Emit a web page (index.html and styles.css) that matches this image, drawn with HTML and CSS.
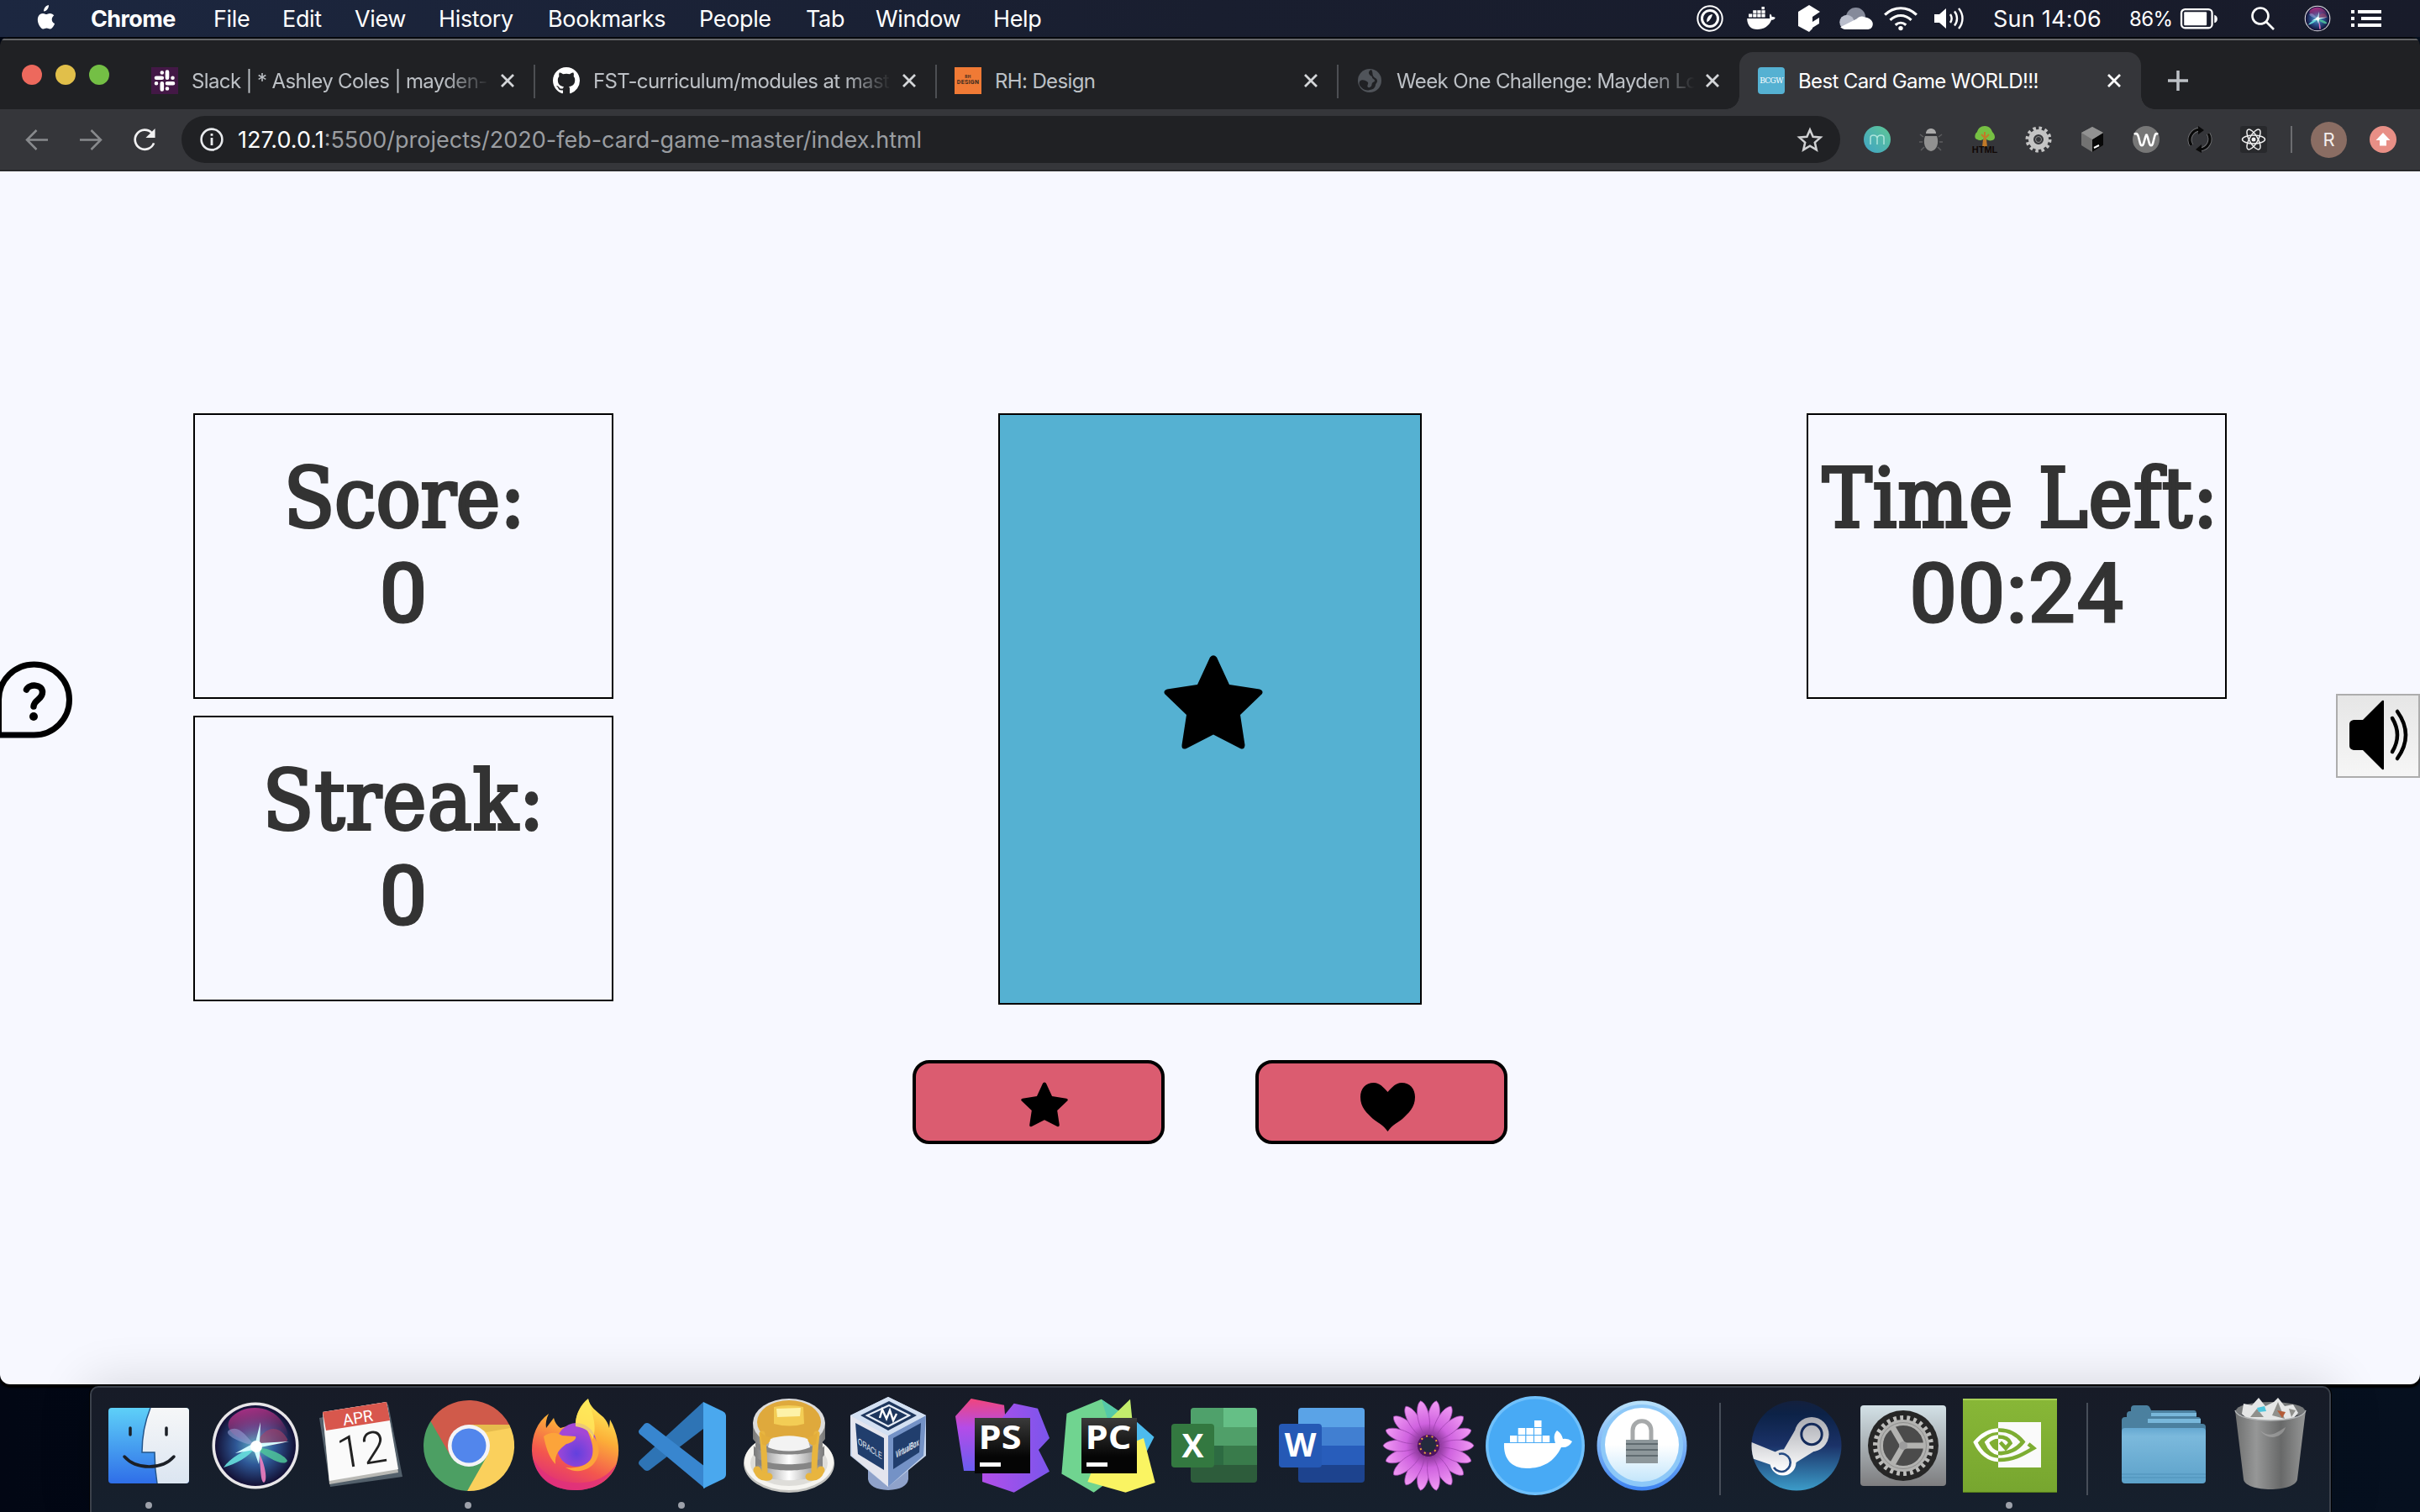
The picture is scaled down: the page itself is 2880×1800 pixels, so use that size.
FILE: index.html
```html
<!DOCTYPE html>
<html lang="en">
<head>
<meta charset="utf-8">
<title>Best Card Game WORLD!!!</title>
<link rel="stylesheet" href="styles.css">
</head>
<body>
<div class="desktop">

<header class="menubar">
  <svg class="apple" viewBox="0 0 26 32"><path d="M18.4 0c.3 2.200-.6 4.100-1.800 5.500-1.200 1.300-2.700 2.100-4 2-.2-2 .7-4 1.900-5.300C15.700 1 17.300.1 18.400 0zM22.200 17c0-3 2.400-4.500 2.600-4.600-1.500-2.100-3.700-2.400-4.500-2.500-1.900-.2-3.700 1.100-4.700 1.100-1 0-2.500-1.100-4.100-1.100-2.100 0-4 1.200-5.100 3.100-2.200 3.800-.6 9.400 1.600 12.500 1 1.500 2.300 3.200 3.900 3.100 1.600 0 2.200-1 4.100-1s2.400 1 4.100 1 2.800-1.500 3.800-3c1.200-1.700 1.700-3.400 1.700-3.500-.1 0-3.400-1.300-3.400-5.100z" transform="translate(-2.500 1)"/></svg>
  <nav class="menus">
    <b>Chrome</b><span>File</span><span>Edit</span><span>View</span><span>History</span><span>Bookmarks</span><span>People</span><span>Tab</span><span>Window</span><span>Help</span>
  </nav>
  <div class="status">
    <svg class="st-circle" viewBox="0 0 32 32" fill="none" stroke="#fff"><circle cx="16" cy="16" r="14.700" stroke-width="2"/><circle cx="16" cy="16" r="9.500" stroke-width="3"/><path d="M12.500 20.500c-1-4 1-8.500 6.500-9.500-1 4-2.500 7-6.500 9.500z" fill="#fff" stroke="none"/></svg>
    <svg class="st-docker" viewBox="0 0 36 30" fill="#fff"><path d="M0 15h29c0-2-1-4 .5-6 1.500 1 2 2.500 2 4 1.500-.3 3 0 4.500 1-1 2.500-3 3-5 3C28 25 21 29 13 29 5 29 0 24 0 15z"/><path d="M2 9h4.500v4.500H2zM7.500 9H12v4.500H7.500zM13 9h4.500v4.500H13zM18.500 9H23v4.500h-4.500zM7.500 4.500H12v3.700H7.500zM13 4.500h4.500v3.700H13zM18.500 4.500H23v3.700h-4.500zM18.500 0h3.700v3.500h-3.700z"/></svg>
    <svg class="st-cube" viewBox="0 0 26 32" fill="#fff"><path d="M0 8 13 0l13 8-9 6v14l-4 4L0 25zM17 20l8-5v7l-8 5z"/></svg>
    <svg class="st-cloud" viewBox="0 0 42 28"><circle cx="20" cy="12" r="12" fill="#858a9a"/><circle cx="9" cy="18" r="9" fill="#b9bdcb"/><path d="M9 27c-3 0-6-1-8-3l20-10c3-3 7-4 10-2 5 0 10 4 10 8 0 5-3 7-7 7z" fill="#fff"/></svg>
    <svg class="st-wifi" viewBox="0 0 42 30" fill="none" stroke="#fff" stroke-width="3.200"><path d="M1.500 10c11-11 28-11 39 0M8 16.500c8-7.500 18-7.500 26 0M14.500 22.500c4-3.500 9-3.500 13 0"/><circle cx="21" cy="26.500" r="2.800" fill="#fff" stroke="none"/></svg>
    <svg class="st-volume" viewBox="0 0 36 26" fill="none" stroke="#fff" stroke-width="2.400"><path d="M0 8h6l8-7v24l-8-7H0z" fill="#fff" stroke="none"/><path d="M19 8c2 3 2 7 0 10M24 4.500c4 5 4 12 0 17M29 1c6 7 6 17 0 24"/></svg>
    <span class="clock">Sun 14:06</span>
    <span class="charge">86%</span>
    <svg class="st-battery" viewBox="0 0 46 26"><rect x="1.200" y="1.200" width="38" height="23" rx="4.500" fill="none" stroke="#fff" stroke-width="2.400"/><rect x="4.500" y="4.500" width="28" height="16.500" rx="1" fill="#fff"/><path d="M42 8c5 1 5 9 0 10z" fill="#fff"/></svg>
    <svg class="st-search" viewBox="0 0 28 28" fill="none" stroke="#fff" stroke-width="2.600"><circle cx="11" cy="11" r="9.500"/><path d="m18 18 9 9"/></svg>
    <svg class="st-siri" viewBox="0 0 128 128"><use href="#siri-orb" transform="translate(-12 -12) scale(1.190)"/></svg>
    <svg class="st-list" viewBox="0 0 36 20" fill="#fff"><path d="M0 0h4v4H0zM8 0h28v4H8zM0 8h4v4H0zM12 8h24v4H12zM0 16h4v4H0zM8 16h28v4H8z"/></svg>
  </div>
</header>

<div class="window">
  <div class="tabstrip">
    <div class="lights"><i class="red"></i><i class="amber"></i><i class="green"></i></div>
    <div class="tabs">
      <div class="tab">
        <svg class="favicon" viewBox="0 0 32 32"><path fill="#431846" d="M0 0h32v32H0z"/><g fill="none" stroke="#fff" stroke-width="4.600" stroke-linecap="round"><path d="M12.800 6.500v0M12.800 12.800H6M19 5.500v7.300M25.500 12.800v0M12.800 19.200v7.300M6 19.200v0M19 19.200h7M19 25.500v0"/></g></svg>
        <span class="title faded">Slack | * Ashley Coles | mayden-</span><svg class="close" viewBox="0 0 18 18"><path d="m2 2 14 14M16 2 2 16"/></svg>
      </div>
      <div class="tab divided">
        <svg class="favicon" viewBox="0 0 16 16"><path fill="#fff" d="M8 0C3.580 0 0 3.580 0 8c0 3.540 2.290 6.530 5.470 7.590.4.070.55-.17.55-.38 0-.19-.01-.82-.01-1.490-2.010.37-2.530-.49-2.690-.94-.09-.23-.48-.94-.82-1.130-.28-.15-.68-.52-.01-.53.63-.01 1.080.58 1.230.82.72 1.210 1.870.87 2.330.66.07-.52.28-.87.51-1.070-1.780-.2-3.640-.89-3.640-3.950 0-.87.31-1.590.82-2.150-.08-.2-.36-1.020.08-2.120 0 0 .67-.21 2.200.82.64-.18 1.320-.27 2-.27s1.360.09 2 .27c1.530-1.040 2.200-.82 2.200-.82.44 1.100.16 1.920.08 2.120.51.56.82 1.270.82 2.150 0 3.070-1.870 3.750-3.650 3.950.29.25.54.73.54 1.480 0 1.070-.01 1.930-.01 2.200 0 .21.15.46.55.38A8.010 8.010 0 0 0 16 8c0-4.420-3.580-8-8-8z"/></svg>
        <span class="title faded">FST-curriculum/modules at mast</span><svg class="close" viewBox="0 0 18 18"><path d="m2 2 14 14M16 2 2 16"/></svg>
      </div>
      <div class="tab divided">
        <span class="favicon rh"><small>RH</small>DESIGN</span>
        <span class="title">RH: Design</span><svg class="close" viewBox="0 0 18 18"><path d="m2 2 14 14M16 2 2 16"/></svg>
      </div>
      <div class="tab divided">
        <svg class="favicon" viewBox="0 0 32 32"><circle cx="16" cy="16" r="14" fill="#50545a"/><path fill="#202124" d="M18 3c-3 1-4 4-2 6 1 2 3 1 3 3s3 2 3 4-2 1-3 3 0 4-3 5-3-2-2-4-1-3-3-4-5-1-6 0-3 4 1 8 8 4 10 3c5 0 7-4 7-6 1-3 2-2 2-5s-4-3-5-6 0-4-2-7z"/></svg>
        <span class="title faded">Week One Challenge: Mayden Lo</span><svg class="close" viewBox="0 0 18 18"><path d="m2 2 14 14M16 2 2 16"/></svg>
      </div>
      <div class="tab active">
        <span class="favicon bcgw">BCGW</span>
        <span class="title">Best Card Game WORLD!!!</span><svg class="close" viewBox="0 0 18 18"><path d="m2 2 14 14M16 2 2 16"/></svg>
      </div>
      <svg class="newtab" viewBox="0 0 24 24"><path d="M12 0v24M0 12h24"/></svg>
    </div>
  </div>

  <div class="toolbar">
    <svg class="nav dim" viewBox="0 0 28 26"><path d="M27 13H2M13.500 1.500 2 13l11.500 11.500"/></svg>
    <svg class="nav dim" viewBox="0 0 28 26"><path d="M1 13h25M14.500 1.500 26 13 14.500 24.500"/></svg>
    <svg class="nav" viewBox="0 0 28 28"><path d="M25.500 18A12 12 0 1 1 23 5.500"/><path d="M27 0v11.500H15.500z" fill="#f1f1f2" stroke="none"/></svg>
    <div class="omnibox">
      <svg class="info" viewBox="0 0 28 28"><circle cx="14" cy="14" r="12.400" fill="none" stroke="#e8eaed" stroke-width="2.600"/><path d="M12.600 7h2.800v2.800h-2.800zM12.600 12h2.800v9h-2.800z" fill="#e8eaed"/></svg>
      <span class="url"><b>127.0.0.1</b>:5500/projects/2020-feb-card-game-master/index.html</span>
      <svg class="bookmark" viewBox="0 0 30 28"><path d="m15 2.500 3.600 8.300 9 .8-6.800 6 2 8.800-7.800-4.700-7.800 4.700 2-8.800-6.800-6 9-.8z" fill="none" stroke="#d0d1d3" stroke-width="2.500"/></svg>
    </div>
    <div class="extensions">
      <svg viewBox="0 0 32 32"><defs><linearGradient id="mm" x1="1" y1="0" x2="0" y2="1"><stop stop-color="#5fc795"/><stop offset="1" stop-color="#3fa3c6"/></linearGradient></defs><circle cx="16" cy="16" r="16" fill="url(#mm)"/><path d="M8 22v-8c0-4 7-4 8 0v8m0-8c1-4 8-4 8 0v8" fill="none" stroke="#aee5dc" stroke-width="1.500"/></svg>
      <svg viewBox="0 0 32 32"><path d="M10 9c0-8 12-8 12 0z" fill="#aaa"/><path d="M9 12h14c3 8 0 17-7 18-7-1-10-10-7-18z" fill="#919191"/><path d="m7 13-4-3M6 19H2M8 25l-4 4M25 13l4-3M26 19h4M24 25l4 4" stroke="#5d5e60" stroke-width="1.500"/></svg>
      <svg viewBox="0 0 32 32"><path d="M14 16h4l1 9h-6z" fill="#c27a28"/><path d="M16 0c6 0 8 4 9 7 4 4 4 9 0 10-3 1-5 0-9-2-4 2-6 3-9 1-4-1-3-7 0-9 1-4 4-7 9-7z" fill="#76c043"/><path d="M16 18V7m0 8 5-5m-5 4-4-4" stroke="#c27a28" stroke-width="2"/><text x="16" y="32" text-anchor="middle" class="html-mark">HTML</text></svg>
      <svg viewBox="0 0 32 32"><circle cx="16" cy="16" r="13.500" fill="none" stroke="#c4c4c4" stroke-width="4" stroke-dasharray="3.500 3.570"/><circle cx="16" cy="16" r="9" fill="none" stroke="#c4c4c4" stroke-width="6"/><circle cx="16" cy="16" r="3.500" fill="none" stroke="#909090" stroke-width="1"/></svg>
      <svg viewBox="0 0 32 32"><path d="M16 1 29 8v15l-13 8-13-8V8z" fill="#727272"/><path d="m16 16 13-8v15l-13 8z" fill="#080808"/><path d="m3 8 13-7 13 7-13 8z" fill="#929292"/><path d="m18 26 6-3" stroke="#fff" stroke-width="2"/></svg>
      <svg viewBox="0 0 32 32"><circle cx="16" cy="16" r="16" fill="#777"/><path d="M2 10c2-2 4-1 5 3l2 8c1 3 3 3 4 0l2.500-9c.5-2 1.500-2 2 0L20 21c1 3 3 3 4 0l2-8c1-4 2-5 4-3" fill="none" stroke="#fff" stroke-width="2.600"/></svg>
      <svg viewBox="0 0 32 32"><g fill="none" stroke="#707174" stroke-width="5"><path d="M6 23C1 15 6 5 16 4M26 9c5 8 0 18-10 19"/></g><g fill="none" stroke="#090909" stroke-width="3.200"><path d="M6 23C1 15 6 5 16 4M26 9c5 8 0 18-10 19"/></g><path d="m14 0 7 5-7 5zM18 22l-7 6 7 4z" fill="#090909"/></svg>
      <svg viewBox="0 0 32 32"><rect width="32" height="32" rx="3" fill="#28292c"/><g fill="none" stroke="#eee" stroke-width="1.500"><ellipse cx="16" cy="16" rx="13.500" ry="5"/><ellipse cx="16" cy="16" rx="13.500" ry="5" transform="rotate(60 16 16)"/><ellipse cx="16" cy="16" rx="13.500" ry="5" transform="rotate(120 16 16)"/></g><circle cx="16" cy="16" r="2.500" fill="#eee"/></svg>
    </div>
    <i class="bar-divider"></i>
    <span class="avatar">R</span>
    <svg class="update" viewBox="0 0 32 32"><circle cx="16" cy="16" r="16" fill="#e88f86"/><path d="m16 8 8.500 9H20v6.500h-8V17H7.500z" fill="#fff"/></svg>
  </div>

  <main class="game">
    <div class="board">
      <section class="side">
        <div class="panel"><span class="label w-score">Score:</span><span class="value">0</span></div>
        <div class="panel"><span class="label w-streak">Streak:</span><span class="value">0</span></div>
      </section>
      <section class="center">
        <div class="card"><svg class="card-star" viewBox="0 0 118 112"><path id="star" d="M55 2.500Q59 -2 63 2.500L78 35l36 5.500Q119 42 117 46L91 71l5.500 36Q96 113 91 111L59 94.500 27 111Q21 113 21.500 107L27 71 1 46Q-1 42 4 40.500L40 35z"/></svg></div>
        <div class="choices">
          <button class="choice"><svg class="choice-star" viewBox="0 0 118 112"><use href="#star"/></svg></button>
          <button class="choice"><svg class="choice-heart" viewBox="0 0 65 58"><path d="M32.500 11C38 5 42 0 49 0c10 0 16 7 16 17 0 13-8 19-15 26-5 4-12 7-17.500 15C27 50 20 47 15 43 8 36 0 30 0 17 0 7 6 0 16 0c7 0 11 5 16.500 11z"/></svg></button>
        </div>
      </section>
      <section class="side">
        <div class="panel"><span class="label w-time">Time Left:</span><span class="value">00:24</span></div>
      </section>
    </div>
    <button class="help"><svg viewBox="0 0 86 92"><path d="M-1.500 88V46a42 42 0 1 1 42 42z" fill="none" stroke="#000" stroke-width="7"/><path d="M31.500 34c3-7 19-7 19 3 0 9-10 9-10.500 17" fill="none" stroke="#000" stroke-width="7.500" stroke-linecap="round"/><circle cx="40" cy="66" r="5"/></svg></button>
    <button class="sound"><svg viewBox="0 0 70 84"><path d="M5 24h11L39 1q2-1 2 1v80q0 2-2 1L16 60H5q-5-1-5-5V29q0-4 5-5z"/><g fill="none" stroke="#000" stroke-width="4.500" stroke-linecap="round"><path d="M51 22q12 20 0 40M57 14q20 28 0 56"/></g></svg></button>
  </main>
</div>

<footer class="dock">
  <div class="app on">
    <svg viewBox="0 0 128 128"><defs><linearGradient id="fa" x2="0" y2="1"><stop stop-color="#5ed0f8"/><stop offset="1" stop-color="#2f6ee8"/></linearGradient><linearGradient id="fb" x2="0" y2="1"><stop stop-color="#f6f7f8"/><stop offset="1" stop-color="#dbe5f1"/></linearGradient></defs><rect x="16" y="19" width="96" height="90" rx="4" fill="url(#fa)"/><path d="M66 19h42q4 0 4 4v82q0 4-4 4H74c-2-12-3-24-3-37H56c0-19 4-38 10-53z" fill="url(#fb)"/><path d="M66 19c-6 15-10 34-10 53h15c0 13 1 25 3 37" fill="none" stroke="#24568a" stroke-width="1.500"/><path d="M42 43v8M85 43v8M35 77c14 16 45 16 59 0" fill="none" stroke="#1b1f26" stroke-width="3.500" stroke-linecap="round"/></svg>
  </div>
  <div class="app">
    <svg viewBox="0 0 128 128"><defs><radialGradient id="sa"><stop stop-color="#63b6c8"/><stop offset=".5" stop-color="#2e5796"/><stop offset="1" stop-color="#15163c"/></radialGradient><linearGradient id="sb" x2=".3" y2="1"><stop stop-color="#b0338e"/><stop offset="1" stop-color="#c92f72" stop-opacity="0"/></linearGradient></defs><g id="siri-orb"><circle cx="64" cy="64" r="51.500" fill="#e8e6e8"/><circle cx="64" cy="64" r="48" fill="#15123a"/><circle cx="64" cy="64" r="46" fill="url(#sa)"/><path d="M64 64C38 54 26 44 34 32c14-18 48-18 62 4 12 18 10 26-32 28z" fill="url(#sb)"/><path d="M64 64c10-24 28-26 38-8 3 5-20 9-38 8z" fill="#a63f66" opacity=".6"/><path d="M64 64C52 52 44 38 32 46c-6 5 14 15 32 18z" fill="#9aa4d8" opacity=".55"/><path d="M64 66c8 6 4 40 10 42 6-2 0-30-10-42z" fill="#f07ec0" opacity=".9"/><path d="M62 66c16 0 36 8 40 16-4 8-24-4-40-16z" fill="#4fc59a" opacity=".85"/><path d="M62 64c-10 6-28 14-36 26 14-4 30-12 38-24z" fill="#67e0de" opacity=".9"/><path d="m64 60 6-24-1 25 35-2-34 7-2 20-6-17-22 4z" fill="#d4fbff"/><circle cx="65" cy="65" r="7" fill="#fff"/></g></svg>
  </div>
  <div class="app">
    <svg viewBox="0 0 128 128"><path d="m13 31 82-16 17 86-86 12z" fill="#53606b"/><path d="m17 24 76-12 14 84-82 14z" fill="#b9b9b5"/><path d="m17 24 76-12 14 80-82 14z" fill="#fafafa"/><path d="M17 24 93 12l4 22-76 12z" fill="#d8574d"/><g transform="rotate(-9 64 64)"><text x="64" y="37" text-anchor="middle" class="cal-month">APR</text><text x="63" y="87" text-anchor="middle" class="cal-day">12</text></g></svg>
  </div>
  <div class="app on">
    <svg viewBox="0 0 128 128"><path d="M18.500 35A54 54 0 0 0 62 118l28-42-26-12z" fill="#4c9f63"/><path d="M62 118A54 54 0 0 0 112 39H64l21.600 37.500z" fill="#fad05c"/><path d="M18.500 35A54 54 0 0 1 112 39H64L42.400 76.500z" fill="#d05a4a"/><path d="M64 39h48l1.500 4L85 48z" fill="#d9ad43" opacity=".6"/><circle cx="64" cy="64" r="25" fill="#f4f4f6"/><circle cx="64" cy="64" r="20.500" fill="#5286ec"/></svg>
  </div>
  <div class="app">
    <svg viewBox="0 0 128 128"><defs><linearGradient id="ff" x1=".7" x2=".3" y2="1"><stop stop-color="#fdf05a"/><stop offset=".35" stop-color="#fcae38"/><stop offset=".7" stop-color="#f3564e"/><stop offset="1" stop-color="#dd2b7e"/></linearGradient><radialGradient id="fp" cy=".7"><stop stop-color="#6240de"/><stop offset="1" stop-color="#a347d6"/></radialGradient></defs><path d="M32 26c-3 6-4 12-3 17l9-12q2 8 8 12c6-2 12-3 18-3 0-14 6-25 15-32 2 10 10 15 18 22 4 4 6 9 7 13l1-10c9 16 12 34 9 48-4 21-23 35-48 36C35 118 13 99 12 70c0-18 6-34 20-44z" fill="url(#ff)"/><path d="M14 80c4 25 25 37 50 37 23 0 43-13 49-32-14 22-36 24-52 23-22-1-38-12-47-28z" fill="#e0317c" opacity=".8"/><ellipse cx="65" cy="63" rx="24" ry="26" fill="url(#fp)"/><path d="M26 53c8-6 16-5 22-1l16 1c2 3-5 8-11 9-8 6-14 12-13 24C31 77 28 62 26 53z" fill="#fca43a"/><path d="M78 46c12 8 18 24 10 36-7 12-23 16-36 8 17 2 30-4 32-15 2-10-2-19-6-29z" fill="#fca43a"/><path d="M79 9c-10 8-16 20-15 32 13 2 19 8 20 16 6-14 1-29-5-48z" fill="#ffea5c" opacity=".8"/></svg>
  </div>
  <div class="app on">
    <svg viewBox="0 0 128 128"><path d="M89 12 13 82q-2 3 0 5l6 6q3 2 6 0l64-49z" fill="#2e74b5"/><path d="m13 45 6-7q3-2 6 0l66 51v26L13 50q-2-3 0-5z" fill="#3886cf"/><path d="m89 12 23 11q4 2 4 6v69q0 4-4 6l-23 11z" fill="#4aa8ee"/></svg>
  </div>
  <div class="app">
    <svg viewBox="0 0 128 128"><defs><linearGradient id="pk"><stop stop-color="#777"/><stop offset=".5" stop-color="#fff"/><stop offset="1" stop-color="#777"/></linearGradient></defs><ellipse cx="64" cy="85" rx="54" ry="35" fill="#c4c4c0"/><ellipse cx="64" cy="83" rx="53" ry="34" fill="#f6f5f1"/><ellipse cx="64" cy="85" rx="46" ry="27" fill="#deddd9"/><path d="M24 38v54c8 17 72 17 80 0V38z" fill="#858585"/><path d="M24 83c8 14 72 14 80 0v11c-8 15-72 15-80 0zM22 64c8 14 76 14 84 0v11c-8 15-76 15-84 0zM21 38h86v18c-8 15-78 15-86 0z" fill="url(#pk)"/><ellipse cx="64" cy="37" rx="43" ry="29" fill="#dcdcdc"/><ellipse cx="64" cy="36" rx="38" ry="26" fill="#dfa93c"/><g fill="none" stroke="#e8b53f" stroke-linecap="round"><path d="M32 50q3 25 3 46M97 50q-3 25-3 46" stroke-width="7"/><path d="M26 93q4 10 14 8M102 93q-4 10-14 8" stroke-width="9"/></g><path d="M30 48c10 12 58 12 68 0l-2 14q-5 4-9-3-23-8-46 0-5 7-9 3z" fill="#e3ad3a"/><path d="M42 56c14-5 30-5 44 0l3 10c-14 6-36 6-50 0z" fill="#f3f3f3"/><path d="M46 18q18-4 35 0l1 20q-17 5-36 0z" fill="#f3cd55"/><path d="m49 20 29-1-1 10-27 1z" fill="#fdf2a8"/></svg>
  </div>
  <div class="app">
    <svg class="vbox" viewBox="0 0 128 128"><path d="M40 92h48v12q-2 12-24 13-22-1-24-13z" fill="#8fa2ca"/><path d="M64 6 109 28v48l-45 37-45-37V28z" fill="#c5d3ea"/><path d="m19 28 45 24v61L21 76z" fill="#e4e5ee"/><path d="m109 28-45 24v61l42-37z" fill="#7492c6"/><path d="m64 6 45 22-45 24-45-24z" fill="#d3e0f2"/><path d="m65 11 33 17-34 18-33-18z" fill="#1d365d"/><path d="m65 16 24 12-25 13-25-13z" fill="none" stroke="#e8eef7" stroke-width="2.200"/><path d="m54 31 3-10 5 11 4-10 4 12 4-8" fill="none" stroke="#fff" stroke-width="2.400"/><path d="m25 37 34 18v38L28 74z" fill="#213e6d"/><path d="m103 37-33 18v37l31-20z" fill="#213e6d"/><text class="cube-label" textLength="34" lengthAdjust="spacingAndGlyphs" transform="matrix(.84 .54 0 1 28 62)">ORACLE</text><text class="cube-label strong" textLength="32" lengthAdjust="spacingAndGlyphs" transform="matrix(.86 -.48 0 1 73 79)">VirtualBox</text></svg>
  </div>
  <div class="app">
    <svg viewBox="0 0 128 128"><defs><linearGradient id="ps" x2="0" y2="1"><stop stop-color="#f0457c"/><stop offset=".4" stop-color="#b44ce8"/><stop offset="1" stop-color="#6a5df0"/></linearGradient><linearGradient id="pt"><stop stop-color="#b24fe9"/><stop offset="1" stop-color="#7b55ec"/></linearGradient><linearGradient id="jbk" x2="0" y2="1"><stop stop-color="#3a3a3a"/><stop offset=".7" stop-color="#050505"/></linearGradient></defs><path d="M26.700 8 66 15.700 70 60 40 94H18L8 29z" fill="url(#ps)"/><path d="m77.700 13.700 28.300 6 14 35.300-13 14 13 25.700-42.300 25L40 107V60z" fill="url(#pt)"/><path d="M31 31h66v66H31z" fill="url(#jbk)"/><text x="35.500" y="68" class="jb" textLength="51" lengthAdjust="spacingAndGlyphs">PS</text><path d="M37 84h25v5H37z" fill="#fff"/></svg>
  </div>
  <div class="app">
    <svg viewBox="0 0 128 128"><path d="m13.500 25.700 41.200-17L82 27v66L45.700 119.700 7.400 97.400z" fill="#70d490"/><path d="m55 9 30 21-20 12z" fill="#55c9a8"/><path d="m89 8.700 3 30H58z" fill="#c3ec6c"/><path d="m95 34 22.500 19.700L102 84H80z" fill="#4dbbee"/><path d="m105 55 13.700 53-35.200 11.700L38.400 107 50 77z" fill="#faf462"/><path d="M31 31h66v66H31z" fill="url(#jbk)"/><text x="35.500" y="68" class="jb" textLength="55" lengthAdjust="spacingAndGlyphs">PC</text><path d="M37 84h25v5H37z" fill="#fff"/></svg>
  </div>
  <div class="app">
    <svg viewBox="0 0 128 128"><rect x="35" y="19" width="79" height="89" rx="4" fill="#2d5c3b"/><path d="M35 42h79v22H35" fill="#509f69"/><path d="M35 23q0-4 4-4h35v23H35z" fill="#4fa16b"/><path d="M74 19h36q4 0 4 4v19H74z" fill="#65bf86"/><path d="M35 64h79v23H35z" fill="#397b4b"/><path d="M35 64h39v23H35z" fill="#2d6b42"/><rect x="12" y="38" width="51" height="52" rx="4" fill="#337840"/><text x="37.500" y="78" text-anchor="middle" class="office">X</text></svg>
  </div>
  <div class="app">
    <svg viewBox="0 0 128 128"><rect x="36" y="19" width="79" height="89" rx="4" fill="#1d438e"/><path d="M36 42V23q0-4 4-4h71q4 0 4 4v19z" fill="#5aa3e7"/><path d="M36 42h79v22H36" fill="#417fd1"/><path d="M36 64h79v23H36z" fill="#285dbb"/><rect x="13" y="38" width="51" height="52" rx="4" fill="#2559b5"/><text x="38.500" y="77" text-anchor="middle" class="office">W</text></svg>
  </div>
  <div class="app">
    <svg viewBox="0 0 128 128"><defs><linearGradient id="pe" x2="0" y2="1"><stop stop-color="#f29bf5"/><stop offset=".6" stop-color="#cf62df"/><stop offset="1" stop-color="#71267f"/></linearGradient><path id="petal" d="M64 56C54 38 56 14 64 10c8 4 10 28 0 46z" fill="url(#pe)" stroke="#9d42ae" stroke-width=".7"/><g id="petals"><use href="#petal"/><use href="#petal" transform="rotate(60 64 64)"/><use href="#petal" transform="rotate(120 64 64)"/><use href="#petal" transform="rotate(180 64 64)"/><use href="#petal" transform="rotate(240 64 64)"/><use href="#petal" transform="rotate(300 64 64)"/></g></defs><use href="#petals" transform="rotate(10 64 64)"/><use href="#petals" transform="rotate(30 64 64)"/><use href="#petals" transform="rotate(50 64 64)"/><circle cx="64" cy="64" r="13" fill="#4d155d"/><circle cx="64" cy="63" r="9" fill="#232a3c"/><circle cx="64" cy="63" r="10.500" fill="none" stroke="#e9a93b" stroke-width="2" stroke-dasharray="2 4.600"/></svg>
  </div>
  <div class="app">
    <svg viewBox="0 0 128 128"><circle cx="64" cy="64" r="59" fill="#6fc0fb"/><circle cx="64" cy="64" r="55.500" fill="#48aaf5"/><path d="M27 61h61c-2-6-2-11 2-15 5 3 6 7 7 10q6-1 11 3-4 8-13 7C87 83 73 91 54 91 36 91 26 80 27 61z" fill="#fff"/><path d="M34 52h8.500v8H34zM43.700 52h8.500v8h-8.500zM53.400 52h8.500v8h-8.500zM63 52h8.500v8H63zM72.700 52h8.500v8h-8.500zM43.700 43h8.500v8h-8.500zM53.400 43h8.500v8h-8.500zM63 43h8.500v8H63zM63 34h8.500v8H63z" fill="#fff"/></svg>
  </div>
  <div class="app">
    <svg viewBox="0 0 128 128"><defs><linearGradient id="lk" x2="0" y2="1"><stop stop-color="#b9e2fb"/><stop offset="1" stop-color="#3e83f0"/></linearGradient><linearGradient id="lw" x2="0" y2="1"><stop offset=".5" stop-color="#fff"/><stop offset="1" stop-color="#c4e6fb"/></linearGradient></defs><circle cx="64" cy="64" r="53.500" fill="url(#lk)"/><circle cx="64" cy="64" r="49" fill="#8dc8f8"/><circle cx="64" cy="63" r="44" fill="url(#lw)"/><path d="M53 59V46c0-15 22-15 22 0v13" fill="none" stroke="#a6a9aa" stroke-width="5"/><path d="M45 57h38v28H45z" fill="#8d979b"/><path d="M45 62h38M45 69h38M45 76h38" stroke="#606b70" stroke-width="2"/></svg>
  </div>
  <i class="dock-divider"></i>
  <div class="app">
    <svg viewBox="0 0 128 128"><defs><linearGradient id="stm" x2="0" y2="1"><stop stop-color="#14203d"/><stop offset=".15" stop-color="#0c2247"/><stop offset=".5" stop-color="#1b3268"/><stop offset="1" stop-color="#3c9cc9"/></linearGradient><linearGradient id="arm" gradientUnits="userSpaceOnUse" x1="0" y1="30" x2="0" y2="95"><stop stop-color="#a9abb2"/><stop offset="1" stop-color="#fff"/></linearGradient><clipPath id="stc"><circle cx="64" cy="64" r="53.500"/></clipPath></defs><circle cx="64" cy="64" r="53.500" fill="url(#stm)"/><g clip-path="url(#stc)"><g fill="url(#arm)"><path d="M8 59 40 72l-6 15L8 78z"/><path d="M62 46 48 70l14 15 24-15z"/><circle cx="82" cy="50.500" r="20.500"/><circle cx="48" cy="84" r="15.500"/></g><circle cx="82" cy="50.500" r="12.200" fill="none" stroke="#142b5b" stroke-width="3"/><path d="M43 74a10.700 10.700 0 1 1-6 16" fill="none" stroke="#244a82" stroke-width="2.600"/></g></svg>
  </div>
  <div class="app">
    <svg viewBox="0 0 128 128"><defs><linearGradient id="sy" x2="0" y2="1"><stop stop-color="#d3e1e7"/><stop offset="1" stop-color="#7d7d7f"/></linearGradient></defs><rect x="13" y="16" width="102" height="96" rx="4" fill="url(#sy)"/><circle cx="64" cy="64" r="42" fill="#262626"/><circle cx="64" cy="64" r="24" fill="#4b4b4b"/><circle cx="64" cy="64" r="33" fill="none" stroke="#bdbdbb" stroke-width="6" stroke-dasharray="3.800 4.175"/><circle cx="64" cy="64" r="27.500" fill="none" stroke="#b2b2b0" stroke-width="7"/><circle cx="64" cy="64" r="27.500" fill="none" stroke="#8d8d8c" stroke-width="1"/><path d="M64 64h25M64 64 51.500 42.500M64 64 51.500 85.500" stroke="#b2b2b0" stroke-width="7"/><circle cx="64" cy="64" r="5" fill="#9c9c9d"/></svg>
  </div>
  <div class="app on">
    <svg viewBox="0 0 128 128"><defs><linearGradient id="nvg" x2="0" y2="1"><stop stop-color="#88b737"/><stop offset="1" stop-color="#77a62f"/></linearGradient><clipPath id="nvl"><path d="M8 30h42v64H8z"/></clipPath><clipPath id="nvr"><path d="M50 30h51v64H50z"/></clipPath><g id="eye" fill="none" stroke-width="4.600"><path d="M50 45.500C37 46 28 54 23 60c6 13 16 20.500 27 21 18 .5 30-7 42-14l-6-5"/><path d="M50 45.500c13-.5 23 6 29.500 14C73 68 62 74 51 73c-8-1-12-7-14.500-13C41 55 46 53.500 50 53.500c9 0 13 3 14.500 7.500L59 67l-6.500-7"/></g></defs><path d="M8 8h112v112H8z" fill="url(#nvg)"/><path d="M8 8h112v2H8z" fill="#a7d057"/><path d="M8 119h112v1H8z" fill="#567e19"/><path d="M50 36h51v54H50z" fill="#fafafa"/><use href="#eye" stroke="#fff" clip-path="url(#nvl)"/><use href="#eye" stroke="#7dad32" clip-path="url(#nvr)"/></svg>
  </div>
  <i class="dock-divider"></i>
  <div class="app">
    <svg viewBox="0 0 128 128"><defs><linearGradient id="fo" x2="0" y2="1"><stop stop-color="#65a8d1"/><stop offset=".15" stop-color="#7bb9dc"/><stop offset="1" stop-color="#5da2ca"/></linearGradient></defs><path d="M25 30V20q0-4 4-4h15q3 0 5 6h51q3 0 3 4v5H25z" fill="#4b809f"/><path d="M49 25h54v4H49z" fill="#78b7da"/><path d="M20 38V27q0-4 4-4h15q4 0 6 7h60q3 0 3 4v5H20z" fill="#4b809f"/><path d="M45 32h63v5H45z" fill="#78b7da"/><path d="M14 50V34q0-4 4-4h20q4 0 6 8h66q4 0 4 4v8z" fill="#4b809f"/><path d="M14 47q0-4 4-4h92q4 0 4 4v58q0 4-4 4H18q-4 0-4-4z" fill="url(#fo)"/><path d="M14 98h100M14 102h100" stroke="#4f91b9" stroke-width="1"/></svg>
  </div>
  <div class="app">
    <svg viewBox="0 0 128 128"><defs><linearGradient id="tr"><stop stop-color="#6f7070"/><stop offset=".3" stop-color="#969797"/><stop offset=".65" stop-color="#686969"/><stop offset="1" stop-color="#969797"/></linearGradient></defs><ellipse cx="64" cy="22" rx="41" ry="10" fill="#77797a"/><path d="m30 26 2-12 10 2 8-9 8 10 10-5 5-5 8 10 10-2 6 10-8 9H38z" fill="#e5e6e6"/><path d="m40 30 8-10 8 10zM66 28l7-16 8 20zM86 20l8 2-5 8z" fill="#90908c"/><path d="m48 19 9-2 2 6-9 1z" fill="#4dc5dc"/><path d="m72 22 10 2-4 7z" fill="#b45c38"/><path d="M22 22c4 16 80 16 84 0l-10 82c-2 16-62 16-64 0z" fill="url(#tr)"/><path d="M22 22c4 16 80 16 84 0" fill="none" stroke="#b2b4b5" stroke-width="1.500"/><path d="M52 46c12 10 20 2 30-4-4 14-22 16-30 4z" fill="#b5b6b6" opacity=".5"/></svg>
  </div>
</footer>
</div>
</body>
</html>
```
FILE: styles.css
```css
* { box-sizing: border-box; }
body { margin: 0; background: #030814; font-family: Inter, "Liberation Sans", sans-serif; }
svg { display: block; overflow: visible; flex: none; }
button { padding: 0; font: inherit; }

.desktop { width: 2880px; height: 1800px; overflow: hidden; display: flex; flex-direction: column; background: linear-gradient(90deg, #020714, #050d1b 50%, #06101f); }

/* menu bar */
.menubar { height: 44px; flex: none; display: flex; align-items: center; color: #fff; background: linear-gradient(90deg, #1c2740, #191e2f 50%, #181b2a); font-size: 27px; padding-left: 42px; }
.apple { width: 26px; height: 32px; fill: #fff; margin-top: -3px; }
.menus { margin-left: 40px; display: grid; grid-template-columns: 146px 82px 86px 100px 130px 180px 127px 83px 140px 80px; letter-spacing: -.35px; white-space: nowrap; }
.menus b { letter-spacing: -.6px; font-weight: 700; }
.status { margin-left: auto; display: flex; align-items: center; padding-right: 46px; white-space: nowrap; }
.st-circle { width: 32px; height: 32px; margin-right: 27px; }
.st-docker { width: 36px; height: 28px; margin-right: 26px; }
.st-cube { width: 26px; height: 32px; margin-right: 23px; }
.st-cloud { width: 41px; height: 27px; margin-right: 11px; }
.st-wifi { width: 42px; height: 29px; margin-right: 19px; }
.st-volume { width: 36px; height: 26px; }
.clock { width: 162px; margin-left: 34px; letter-spacing: .25px; }
.charge { width: 60px; font-size: 24px; letter-spacing: -.6px; }
.st-battery { width: 46px; height: 25px; margin-right: 39px; }
.st-search { width: 28px; height: 28px; margin-right: 35px; }
.st-siri { width: 32px; height: 32px; margin-right: 24px; }
.st-list { width: 36px; height: 20px; }

/* browser window */
.window { height: 1604px; flex: none; display: flex; flex-direction: column; border-radius: 10px 10px 12px 12px; overflow: hidden; box-shadow: 0 3px 2px 1px #000; }
.tabstrip { height: 86px; flex: none; display: flex; background: #202124; border-top: 2px solid #05070c; box-shadow: inset 0 2px #636467; padding-left: 26px; }
.lights { width: 132px; display: flex; gap: 16px; padding-top: 31px; }
.lights i { width: 24px; height: 24px; border-radius: 50%; }
.red { background: #ed695d; } .amber { background: #e1bf4a; } .green { background: #74bf45; }
.tabs { display: flex; align-items: flex-end; }
.tab { position: relative; width: 478px; height: 68px; padding: 0 23px 0 22px; display: flex; align-items: center; color: #bdc1c6; font-size: 24px; }
.tab.divided::before { content: ""; position: absolute; left: -1px; top: 15px; width: 2px; height: 40px; background: #4d4f53; }
.favicon { width: 32px; height: 32px; margin-right: 16px; flex: none; }
.title { width: 368px; white-space: nowrap; letter-spacing: -.63px; }
.title.faded { -webkit-mask-image: linear-gradient(90deg, #000 300px, transparent 355px); mask-image: linear-gradient(90deg, #000 300px, transparent 355px); }
.close { width: 18px; height: 18px; margin-left: auto; stroke: #d4d6d9; stroke-width: 2.800; }
.rh { background: #f07a35; color: #3b2a20; font: bold 7px/9px "Roboto", sans-serif; text-align: center; padding-top: 8px; letter-spacing: .3px; }
.rh small { display: block; font-size: 5px; line-height: 6px; }
.bcgw { background: #55b1d2; border-radius: 4px; color: #fff; font: 9px/32px "DejaVu Serif", serif; text-align: center; letter-spacing: -.6px; }
.tab.active { background: #35363a; color: #fff; border-radius: 16px 16px 0 0; }
.active::before, .active::after { content: ""; position: absolute; bottom: 0; width: 16px; height: 16px; }
.active::before { left: -16px; background: radial-gradient(circle at 0 0, transparent 15.500px, #35363a 16px); }
.active::after { right: -16px; background: radial-gradient(circle at 100% 0, transparent 15.500px, #35363a 16px); }
.active .close { stroke: #fff; }
.newtab { width: 24px; height: 24px; margin: 0 0 22px 32px; stroke: #bdc1c6; stroke-width: 3.500; }

.toolbar { height: 74px; flex: none; display: flex; align-items: center; padding: 0 28px 0 30px; background: #35363a; border-bottom: 2px solid #28292b; }
.nav { width: 28px; height: 27px; margin-right: 36px; fill: none; stroke: #f1f1f2; stroke-width: 2.800; }
.nav.dim { stroke: #888a8d; stroke-width: 2.500; }
.nav:nth-child(3) { margin-right: 30px; }
.omnibox { width: 1974px; height: 56px; border-radius: 28px; background: #202124; display: flex; align-items: center; padding: 0 21px 0 22px; }
.info { width: 28px; height: 28px; margin-right: 17px; }
.url { color: #9a9da1; font-size: 27px; white-space: nowrap; }
.url b { color: #fff; font-weight: 400; }
.bookmark { width: 30px; height: 28px; margin-left: auto; }
.extensions { display: flex; gap: 32px; margin-left: 28px; }
.extensions svg { width: 32px; height: 32px; }
.html-mark { font: bold 11px "Liberation Sans", sans-serif; fill: #100806; }
.bar-divider { width: 2px; height: 32px; margin: 0 22px 0 28px; background: #6c6d70; }
.avatar { width: 43px; height: 43px; border-radius: 50%; background: #8a6d63; color: #f3eeec; font-size: 22px; line-height: 43px; text-align: center; }
.update { width: 32px; height: 32px; margin-left: 27px; }

/* game page */
.game { position: relative; height: 1444px; flex: none; background: #f7f8ff; padding: 288px 230px 0; }
.board { display: flex; justify-content: space-between; align-items: flex-start; }
.side { width: 500px; display: flex; flex-direction: column; gap: 20px; }
.panel { height: 340px; border: 2px solid #000; padding-top: 42px; display: flex; flex-direction: column; align-items: center; color: #333; white-space: nowrap; }
.label { font: 97.500px/114px "Roboto Slab", "DejaVu Serif Condensed", "DejaVu Serif", serif; font-stretch: condensed; -webkit-text-stroke: 4px #333; }
.value { font: 500 101px/114px "Roboto Slab", Roboto, sans-serif; -webkit-text-stroke: 1px #333; }
.w-score { letter-spacing: .3px; margin-left: 3px; }
.w-streak { letter-spacing: 1.700px; margin-left: 2px; }
.w-time { letter-spacing: 1.500px; margin-left: 10px; }
.center { width: 708px; display: flex; flex-direction: column; align-items: center; gap: 66px; }
.card { width: 504px; height: 704px; border: 2px solid #000; background: #55b1d2; display: flex; justify-content: center; padding: 286px 0 0 7px; }
.card-star { width: 118px; height: 112px; }
.choices { width: 708px; display: flex; justify-content: space-between; }
.choice { width: 300px; height: 100px; border: 4px solid #000; border-radius: 20px; background: #db5c70; display: flex; justify-content: center; align-items: flex-start; padding: 22px 0 0 14px; }
.choice-star { width: 56px; height: 54px; }
.choice-heart { width: 65px; height: 58px; margin-top: 1px; }
.help { position: absolute; left: 0; top: 582px; width: 90px; height: 94px; border: 0; background: none; overflow: hidden; }
.help svg { width: 86px; height: 92px; }
.sound { position: absolute; right: 0; top: 622px; width: 100px; height: 100px; border: 2px solid #adadad; background: linear-gradient(#e6e6e6, #f6f6f6); display: flex; align-items: center; padding-left: 14px; }
.sound svg { width: 70px; height: 84px; margin-top: -3px; }

/* dock */
.dock { position: relative; width: 2667px; height: 152px; flex: none; margin: 2px 0 0 107px; display: flex; padding-left: 4.600px; border: 2px solid #3b414b; border-radius: 10px 10px 0 0; background: linear-gradient(#171b27, #16202d); box-shadow: 0 0 0 1px #000, 0 0 60px 4px rgba(0, 0, 0, .14); }
.app { position: relative; width: 126.940px; display: flex; justify-content: center; padding-top: 5px; }
.app svg { width: 128px; height: 128px; }
.app .vbox { margin-left: -17px; }
.app.on::after { content: ""; position: absolute; left: 59px; top: 136px; width: 8px; height: 8px; border-radius: 50%; background: #9da1aa; }
.dock-divider { width: 2px; height: 110px; margin: 18px 26px 0 28.500px; background: #474e59; }
.cal-month { font: 19px Roboto, sans-serif; fill: #fff; }
.cal-day { font: 300 53px Roboto, sans-serif; fill: #222; }
.cube-label { font: 11px "Liberation Sans", sans-serif; fill: #e8eef7; }
.cube-label.strong { font-weight: bold; font-size: 12px; }
.jb { font: bold 40px "Open Sans", sans-serif; fill: #fff; }
.office { font: bold 39px "Open Sans", sans-serif; fill: #fff; }
```
